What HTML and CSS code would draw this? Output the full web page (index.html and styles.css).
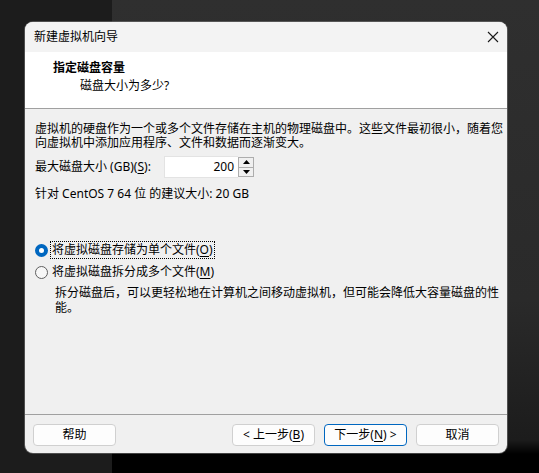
FILE: index.html
```html
<!DOCTYPE html>
<html lang="zh-CN">
<head>
<meta charset="utf-8">
<title>新建虚拟机向导</title>
<link rel="stylesheet" href="styles.css">
</head>
<body>
<div class="desktop">
  <div class="window">
    <div class="titlebar">
      <span class="title">新建虚拟机向导</span>
      <svg class="close" width="12" height="12" viewBox="0 0 12 12"><path d="M1 1 L11 11 M11 1 L1 11" stroke="#1a1a1a" stroke-width="1.1" fill="none"/></svg>
    </div>
    <div class="header">
      <div class="h-title">指定磁盘容量</div>
      <div class="h-sub">磁盘大小为多少?</div>
    </div>
    <div class="content">
      <div class="intro">
        <div class="line">虚拟机的硬盘作为一个或多个文件存储在主机的物理磁盘中。这些文件最初很小，随着您</div>
        <div class="line">向虚拟机中添加应用程序、文件和数据而逐渐变大。</div>
      </div>
      <div class="size-row">
        <span class="size-label">最大磁盘大小 (GB)(<u>S</u>):</span>
        <div class="spin">
          <div class="spin-input">200</div>
          <div class="spin-btns">
            <div class="spin-btn"><svg width="7" height="4" viewBox="0 0 7 4"><path d="M0 4 L3.5 0 L7 4 Z" fill="#000"/></svg></div>
            <div class="spin-btn"><svg width="7" height="4" viewBox="0 0 7 4"><path d="M0 0 L3.5 4 L7 0 Z" fill="#000"/></svg></div>
          </div>
        </div>
      </div>
      <div class="recommend">针对 CentOS 7 64 位 的建议大小: 20 GB</div>
      <div class="radio-row first">
        <span class="radio checked"></span>
        <span class="radio-text focus">将虚拟磁盘存储为单个文件(<u>O</u>)</span>
      </div>
      <div class="radio-row">
        <span class="radio"></span>
        <span class="radio-text">将虚拟磁盘拆分成多个文件(<u>M</u>)</span>
      </div>
      <div class="desc">
        <div class="line">拆分磁盘后，可以更轻松地在计算机之间移动虚拟机，但可能会降低大容量磁盘的性</div>
        <div class="line">能。</div>
      </div>
    </div>
    <div class="footer">
      <button class="btn help">帮助</button>
      <button class="btn">&lt; 上一步(<u>B</u>)</button>
      <button class="btn primary">下一步(<u>N</u>) &gt;</button>
      <button class="btn">取消</button>
    </div>
  </div>
</div>
</body>
</html>
```
FILE: styles.css
```css
html, body {
  margin: 0;
  padding: 0;
}
body {
  width: 539px;
  height: 473px;
  overflow: hidden;
  font-family: "Noto Sans", "Noto Sans CJK SC", sans-serif;
  font-size: 12px;
  color: #000;
}
.desktop {
  position: relative;
  width: 539px;
  height: 473px;
  background:
    linear-gradient(#1c1c1c, #1c1c1c) no-repeat 0 0 / 112px 100%,
    linear-gradient(to bottom, #2f2f2f 0, #2a2a2a 300px, #1c1c1c 440px, #000 454px) no-repeat 112px 0 / 427px 100%;
}
.window {
  position: absolute;
  left: 25px;
  top: 22px;
  width: 482px;
  height: 431px;
  border-radius: 8px;
  background: #f0f0f0;
  box-shadow: 0 0 0 1px rgba(120,120,120,0.55);
  display: flex;
  flex-direction: column;
  overflow: hidden;
}
.titlebar {
  height: 30px;
  flex: none;
  background: #f3f3f3;
  display: flex;
  align-items: center;
  justify-content: space-between;
  padding: 0 8px 0 9px;
}
.title {
  line-height: 16px;
}
.close {
  display: block;
}
.header {
  height: 56px;
  flex: none;
  background: #fff;
  border-bottom: 1px solid #a0a0a0;
  padding-left: 28px;
}
.h-title {
  font-weight: bold;
  line-height: 16px;
  margin-top: 8px;
}
.h-sub {
  line-height: 16px;
  margin-top: 2px;
  padding-left: 27px;
}
.content {
  flex: 1;
  padding: 13px 0 0 10px;
}
.line {
  height: 14px;
  line-height: 14px;
  white-space: nowrap;
}
.size-row {
  display: flex;
  align-items: center;
  margin-top: 6px;
  height: 22px;
}
.size-label {
  width: 129px;
  flex: none;
  line-height: 14px;
}
.spin {
  display: flex;
  height: 22px;
}
.spin-input {
  width: 74px;
  height: 22px;
  box-sizing: border-box;
  background: #fff;
  border: 1px solid #e3e3e3;
  border-right: none;
  text-align: right;
  padding-right: 4px;
  line-height: 20px;
}
.spin-btns {
  width: 16px;
  height: 22px;
  display: flex;
  flex-direction: column;
  box-sizing: border-box;
  padding: 1px 0;
}
.spin-btn {
  flex: 1;
  border: 1px solid #adadad;
  background: #f0f0f0;
  display: flex;
  align-items: center;
  justify-content: center;
}
.spin-btn + .spin-btn {
  border-top: none;
}
.recommend {
  line-height: 14px;
  margin-top: 9px;
}
.radio-row {
  display: flex;
  align-items: center;
  height: 18px;
  margin-top: 4px;
}
.radio-row.first {
  margin-top: 40px;
}
.radio {
  width: 13px;
  height: 13px;
  box-sizing: border-box;
  border-radius: 50%;
  border: 1px solid #5f5f5f;
  background: #f7f7f7;
  margin-right: 2px;
  flex: none;
}
.radio.checked {
  border: 4px solid #0067c0;
  background: #fff;
}
.radio-text {
  line-height: 14px;
  padding: 1px 1px;
  border: 1px dotted transparent;
}
.radio-text.focus {
  border-color: #000;
}
.desc {
  margin-top: 4px;
  padding-left: 20px;
}
.desc .line {
  height: 15px;
  line-height: 15px;
}
.footer {
  height: 39px;
  flex: none;
  box-sizing: border-box;
  border-top: 1px solid #a0a0a0;
  display: flex;
  align-items: flex-start;
  gap: 9px;
  padding: 9px 8px 0 8px;
}
.btn {
  width: 83px;
  height: 22px;
  box-sizing: border-box;
  border: 1px solid #d0d0d0;
  border-radius: 4px;
  background: #fdfdfd;
  font-family: inherit;
  font-size: 12px;
  color: #000;
  padding: 0;
  line-height: 18px;
}
.btn.help {
  margin-right: auto;
}
.btn.primary {
  border-color: #0067c0;
}
u {
  text-decoration: underline;
  text-underline-offset: 2px;
}
```
